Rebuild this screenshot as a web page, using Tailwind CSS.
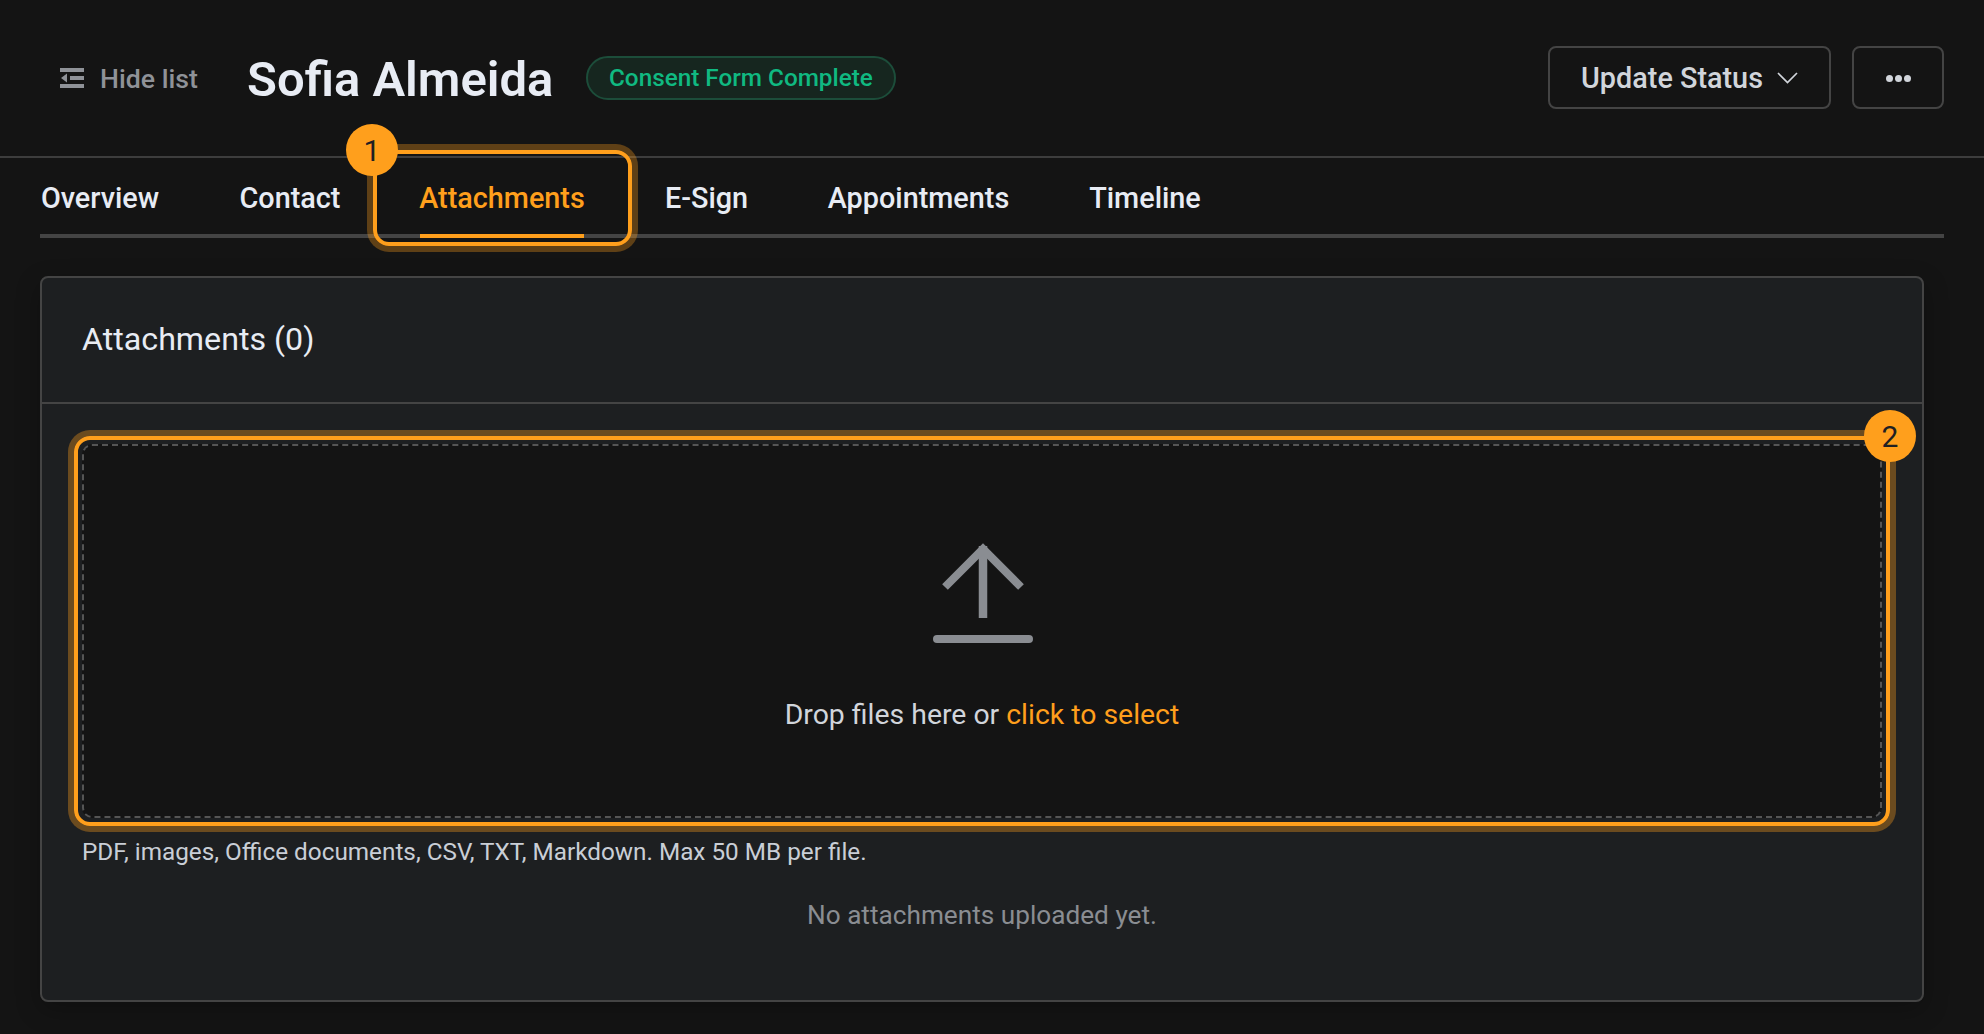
<!DOCTYPE html>
<html lang="en">
<head>
    <meta charset="UTF-8">
    <title>Sofia Almeida</title>
    <script src="https://cdn.jsdelivr.net/npm/@tailwindcss/browser@4"></script>
</head>
<body class="bg-[#141414] font-['Roboto',sans-serif] h-[1034px] overflow-hidden">
    <header class="h-[158px] border-b-2 border-[#3d3d3d] flex items-center pl-[60px] pr-[40px]">
        <button class="flex items-center gap-[16px] text-[#8f9298] text-[26.7px] font-medium w-[187px]">
            <svg class="w-[24px] h-[20px]" viewBox="0 0 24 20" fill="#8f9298">
                <rect x="0" y="0" width="24" height="4"/>
                <rect x="10" y="8" width="14" height="4"/>
                <rect x="0" y="16" width="24" height="4"/>
                <path d="M7 5.500v9L1 10z"/>
            </svg>
            <span class="pt-[2px]">Hide list</span>
        </button>
        <h1 class="text-[49px] font-semibold text-[#e8ecf4] w-[339px] pt-[3px]">Sofia Almeida</h1>
        <span class="h-[44px] px-[21px] flex items-center rounded-full border-2 border-[#1c4d3a] bg-[#16261f] text-[#10b981] text-[24.300px] font-medium">Consent Form Complete</span>
        <div class="ml-auto flex gap-[21px] -mt-[1px]">
            <button class="w-[283px] h-[63px] rounded-[8px] border-2 border-[#444] flex items-center justify-center gap-[14px] text-[#d1d5db] text-[28.800px] font-medium">
                <span class="pt-[3px]">Update Status</span>
                <svg class="w-[21px] h-[12px] mt-[1px]" viewBox="0 0 21 12" fill="none" stroke="#d1d5db" stroke-width="1.700"><path d="M1 1l9.500 9.500L20 1"/></svg>
            </button>
            <button class="w-[92px] h-[63px] pt-[1px] rounded-[8px] border-2 border-[#444] flex items-center justify-center gap-[2px]">
                <span class="w-[7px] h-[7px] rounded-full bg-[#d1d5db]"></span>
                <span class="w-[7px] h-[7px] rounded-full bg-[#d1d5db]"></span>
                <span class="w-[7px] h-[7px] rounded-full bg-[#d1d5db]"></span>
            </button>
        </div>
    </header>

    <nav class="mx-[40px] h-[80px] border-b-4 border-[#444] flex gap-[80px] text-[28.800px] font-[550] text-[#e8ecf4] whitespace-nowrap">
        <a class="w-[120px] h-[80px] pt-[1px] flex items-center justify-center">Overview</a>
        <a class="w-[100px] h-[80px] pt-[1px] flex items-center justify-center">Contact</a>
        <a class="relative w-[164px] h-[80px] pt-[1px] flex items-center justify-center text-[#ff9f1c]">
            Attachments
            <span class="absolute inset-x-0 top-[76px] h-[4px] bg-[#ff9f1c]"></span>
            <span class="absolute -top-[8px] -bottom-[8px] -left-[47px] -right-[48px] rounded-[16px] border-4 border-[#ff9f1c] shadow-[0_0_0_6px_rgba(255,159,28,0.32)]"></span>
            <span class="absolute left-[-74px] top-[-34px] w-[52px] h-[52px] rounded-full bg-[#ff9f1c] text-[#1e2023] text-[30px] font-normal flex items-center justify-center">1</span>
        </a>
        <a class="w-[83px] ml-[1px] h-[80px] pt-[1px] flex items-center justify-center">E-Sign</a>
        <a class="w-[181px] h-[80px] pt-[1px] flex items-center justify-center">Appointments</a>
        <a class="w-[110px] ml-[1px] h-[80px] pt-[1px] flex items-center justify-center">Timeline</a>
    </nav>

    <main class="mx-[40px] mt-[38px] w-[1884px] h-[726px] bg-[#1d1f21] border-2 border-[#444] rounded-[8px] shadow-[0_8px_24px_rgba(0,0,0,0.25)]">
        <div class="h-[126px] pb-[1px] border-b-2 border-[#444] flex items-center px-[40px] text-[32.200px] text-[#e8ecf4]">Attachments (0)</div>
        <div class="px-[40px] pt-[40px]">
            <div class="relative h-[374px] rounded-[10px] border-2 border-dashed border-[#555] bg-[#141414] flex flex-col items-center">
                <svg class="mt-[97px] ml-[2px] w-[100px] h-[100px]" viewBox="0 0 100 100" fill="none" stroke="#8a8d92">
                    <path d="M50 3v72" stroke-width="8.500"/>
                    <path d="M12 44L50 6 88 44" stroke-width="8"/>
                    <rect x="0" y="92" width="100" height="8" rx="4" fill="#8a8d92" stroke="none"/>
                </svg>
                <p class="mt-[51px] text-[28.400px] text-[#d1d5db]">Drop files here or <span class="text-[#ff9f1c]">click to select</span></p>
                <span class="absolute -inset-[10px] rounded-[16px] border-4 border-[#ff9f1c] shadow-[0_0_0_6px_rgba(255,159,28,0.35)]"></span>
                <span class="absolute right-[-36px] top-[-36px] w-[52px] h-[52px] rounded-full bg-[#ff9f1c] text-[#1e2023] text-[30px] flex items-center justify-center">2</span>
            </div>
            <p class="mt-[16px] text-[24.300px] text-[#c9ced6]">PDF, images, Office documents, CSV, TXT, Markdown. Max 50 MB per file.</p>
            <p class="mt-[26px] text-center text-[26.200px] text-[#8a8d92]">No attachments uploaded yet.</p>
        </div>
    </main>
</body>
</html>
